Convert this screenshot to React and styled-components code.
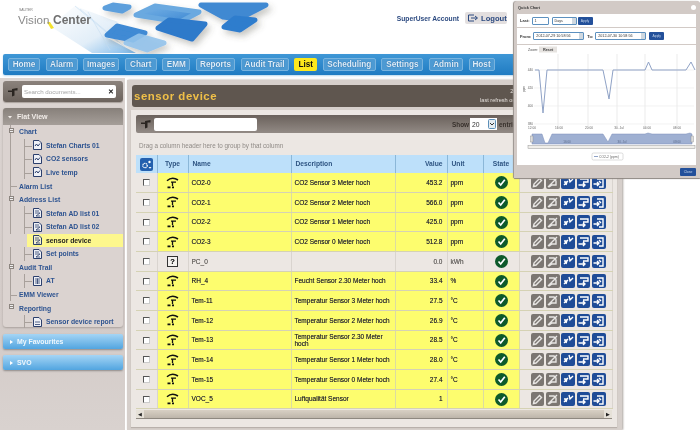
import React from 'react';
import styled, { createGlobalStyle } from 'styled-components';

const GlobalStyle = createGlobalStyle`
  html, body { margin: 0; padding: 0; background: #fff; }
  body { font-family: "Liberation Sans", Arial, sans-serif; overflow: hidden; }
`;

const Page = styled.div`
  position: relative;
  width: 700px;
  height: 430px;
  overflow: hidden;
  background: #fff;
  filter: blur(0.35px);
`;

const Header = styled.header`
  display: flex;
  align-items: center;
  height: 54px;
  padding-right: 193px;
`;

const Logo = styled.svg`
  flex: none;
  width: 290px;
  height: 54px;
`;

const Account = styled.span`
  margin-left: auto;
  margin-bottom: 18px;
  font-size: 6.7px;
  font-weight: bold;
  color: #2c4a80;
`;

const LogoutButton = styled.button`
  display: flex;
  align-items: center;
  gap: 2px;
  height: 12px;
  width: 42px;
  margin: 0 0 18px 6px;
  padding: 0 0 0 3px;
  border: 0;
  border-radius: 2px;
  background: #e3dfdf;
  font: bold 7.6px "Liberation Sans", Arial, sans-serif;
  color: #2c4a80;
`;

const NavBar = styled.nav`
  display: flex;
  align-items: center;
  gap: 5.6px;
  width: 619px;
  height: 21px;
  margin-left: 3px;
  padding-left: 5px;
  box-sizing: border-box;
  border-radius: 2px;
  background: linear-gradient(#3f97d6, #1f7bc2);
  box-shadow: 0 1px 2px #b9d8ee;
`;

const NavItem = styled.a`
  display: flex;
  align-items: center;
  justify-content: center;
  flex: none;
  width: ${(p) => p.$w}px;
  height: 13px;
  border-radius: 2px;
  box-sizing: border-box;
  font-size: 8.2px;
  font-weight: bold;
  color: ${(p) => (p.$active ? '#111' : '#dfeefa')};
  background: ${(p) => (p.$active ? '#fde81c' : '#4d9ad3')};
  border: ${(p) => (p.$active ? '0' : '1px solid #78b3de')};
  text-shadow: ${(p) => (p.$active ? 'none' : '0 0 1px #17568c')};
`;

const Body = styled.div`
  display: flex;
  gap: 2px;
  height: 352px;
  margin-top: 3px;
`;

const Sidebar = styled.aside`
  display: flex;
  flex-direction: column;
  width: 125px;
  flex: none;
  padding: 3px 2px 0 3px;
  box-sizing: border-box;
  background: linear-gradient(#dcd5d2, #d3cbc8 70%, #d9d2cf);
`;

const SearchPanel = styled.div`
  display: flex;
  align-items: center;
  gap: 4px;
  height: 21px;
  padding-left: 5px;
  border-radius: 3px;
  background: linear-gradient(#8b827c, #6c635d);
  box-shadow: 0 1px 1px #a9a19c;
`;

const SearchBox = styled.div`
  display: flex;
  align-items: center;
  justify-content: space-between;
  width: 94px;
  height: 13px;
  padding: 0 2px;
  border-radius: 2px;
  box-sizing: border-box;
  background: #fff;
  font-size: 6.2px;
  color: #a5a5a5;
`;

const Clear = styled.b`
  font-size: 7px;
  color: #222;
`;

const TreePanel = styled.section`
  height: 219px;
  margin-top: 6px;
  border-radius: 3px;
  background: #dbd3d0;
  box-shadow: 0 1px 2px #a9a19c;
`;

const TreeHeader = styled.div`
  display: flex;
  align-items: center;
  gap: 5px;
  height: 17px;
  padding-left: 5px;
  border-radius: 3px 3px 0 0;
  background: linear-gradient(#87807a, #a59e99);
  font-size: 7.1px;
  font-weight: bold;
  color: #f1ece8;
`;

const TreeList = styled.ul`
  list-style: none;
  margin: 0;
  padding: 0;
`;

const TreeRow = styled.li`
  position: relative;
  display: flex;
  align-items: center;
  gap: 4px;
  height: 13.57px;
  padding-left: ${(p) => (p.$child ? 30 : 16)}px;
  margin-left: ${(p) => (p.$active ? 24 : 0)}px;
  ${(p) => p.$active && 'padding-left: 6px; background: #fdf78d;'}
  font-size: 6.8px;
  font-weight: bold;
  color: ${(p) => (p.$active ? '#222' : '#2d5390')};
  white-space: nowrap;
`;

const Expander = styled.i`
  position: absolute;
  z-index: 1;
  left: 6px;
  top: 3px;
  width: 3px;
  height: 3px;
  border: 1px solid #8c8580;
  background: linear-gradient(#8c8580, #8c8580) center / 3px 1px no-repeat, #eee;
`;

const Branch = styled.i`
  position: absolute;
  left: ${(p) => p.$left}px;
  top: 7px;
  width: ${(p) => p.$w}px;
  height: 1px;
  background: #a8a09b;
`;

const Trunk = styled.i`
  position: absolute;
  left: ${(p) => p.$left}px;
  top: 0;
  bottom: 0;
  width: 1px;
  background: #a8a09b;
`;

const Accordion = styled.div`
  display: flex;
  align-items: center;
  gap: 4px;
  height: 15px;
  margin-top: ${(p) => p.$top}px;
  padding-left: 7px;
  border-radius: 2px;
  background: linear-gradient(#a5d5f5, #52a5e0);
  box-shadow: 0 1px 2px #8f8a88;
  font-size: 6.9px;
  font-weight: bold;
  color: #eef7fd;
`;

const Main = styled.main`
  width: 495px;
  flex: none;
  margin-top: 2px;
  padding: 5px 5px 0 4px;
  box-sizing: border-box;
  background: #d6cfcb;
  box-shadow: 1px 0 2px #a9a19c;
`;

const TitleBar = styled.div`
  display: flex;
  align-items: center;
  justify-content: space-between;
  height: 22px;
  margin-left: 1px;
  padding: 0 48px 0 2px;
  border-radius: 3px;
  background: #5f564f;
`;

const Title = styled.h1`
  margin: 0;
  font-size: 11.4px;
  letter-spacing: 0.55px;
  color: #f0c048;
`;

const Refresh = styled.div`
  text-align: center;
  font-size: 5.6px;
  line-height: 9px;
  color: #e4dfdb;
`;

const Card = styled.div`
  height: 312px;
  margin-top: 3px;
  padding: 5px 5px 0;
  background: #ece7e3;
  box-shadow: 0 1px 1px #b8b0ab;
`;

const Toolbar = styled.div`
  display: flex;
  align-items: center;
  height: 18px;
  padding: 0 5px;
  border-radius: 2px;
  background: linear-gradient(#6a615b, #928a85);
`;

const FilterInput = styled.div`
  width: 103px;
  height: 13px;
  margin-left: 3px;
  border-radius: 2px;
  background: #fff;
`;

const ShowLabel = styled.span`
  margin-left: ${(p) => p.$left || 0}px;
  font-size: 6.4px;
  font-weight: bold;
  color: #38312c;
`;

const PageSize = styled.div`
  display: flex;
  align-items: center;
  justify-content: space-between;
  width: 27px;
  height: 12px;
  margin: 0 2px 0 1px;
  padding: 0 1px 0 2px;
  box-sizing: border-box;
  background: #fff;
  font-size: 6.8px;
  color: #333;
`;

const GroupHint = styled.div`
  height: 22px;
  line-height: 26px;
  font-size: 6.3px;
  color: #8f8a86;
  padding-left: 3px;
`;

const Table = styled.table`
  width: 476px;
  table-layout: fixed;
  border-collapse: collapse;
  font-size: 6.5px;
  line-height: 7.4px;
  color: #2f2f28;
`;

const Th = styled.th`
  height: 18px;
  padding: 0 4px;
  box-sizing: border-box;
  background: #bde0fa;
  border-right: 1px solid #8bb7d8;
  font-size: 6.7px;
  color: #2e5482;
  text-align: ${(p) => p.$align || 'left'};
`;

const Td = styled.td`
  height: 19.67px;
  padding: 0 ${(p) => (p.$align === 'right' ? 4 : 3)}px 0 3px;
  box-sizing: border-box;
  background: ${(p) => (p.$plain ? '#ece7e3' : '#fdfd6e')};
  border-bottom: 1px solid #d5d2b4;
  border-right: 1px solid ${(p) => (p.$plain ? '#d9d4cf' : '#dcdca0')};
  color: ${(p) => (p.$muted ? '#77726e' : 'inherit')};
  text-shadow: 0 0 0.4px #555;
  text-align: ${(p) => p.$align || 'left'};
`;

const CheckBox = styled.i`
  display: block;
  width: 5px;
  height: 5px;
  margin: 0 auto;
  border: 1px solid #555;
  border-right-color: #ccc;
  border-bottom-color: #ccc;
  background: #fff;
`;

const GearButton = styled.span`
  display: flex;
  align-items: center;
  justify-content: center;
  width: 13px;
  height: 13px;
  margin: 0 auto;
  border-radius: 2px;
  background: #2460ae;
`;

const StateDot = styled.span`
  display: flex;
  align-items: center;
  justify-content: center;
  width: 13px;
  height: 13px;
  margin: 0 auto;
  border-radius: 50%;
  background: #0d5a2b;
`;

const Actions = styled.div`
  display: flex;
  gap: 1.6px;
  padding-left: 11px;
`;

const ActionButton = styled.span`
  display: flex;
  align-items: center;
  justify-content: center;
  width: 13.8px;
  height: 13.5px;
  border-radius: 2px;
  background: ${(p) => (p.$grey ? '#7b7672' : '#1f4c97')};
`;

const HelpBox = styled.span`
  display: flex;
  align-items: center;
  justify-content: center;
  width: 9px;
  height: 9px;
  margin: 0 auto;
  border: 1px solid #333;
  font-size: 7.5px;
  font-weight: bold;
  color: #222;
  background: #f4f2ef;
`;

const Scrollbar = styled.div`
  display: flex;
  align-items: center;
  justify-content: space-between;
  height: 8px;
  margin-top: 1px;
  width: 476px;
  background: linear-gradient(#d8d0c4, #bdb5aa);
  border-bottom: 1px solid #8e8880;
`;

const ScrollEnd = styled.span`
  display: flex;
  align-items: center;
  justify-content: center;
  width: 8px;
  height: 8px;
  background: #e6e1d8;
  font-size: 4.5px;
  color: #222;
`;

const Popup = styled.div`
  position: absolute;
  top: 1px;
  right: 0;
  width: 186px;
  height: 177px;
  box-sizing: border-box;
  display: flex;
  flex-direction: column;
  padding: 0 4px 0 3px;
  border-radius: 3px 3px 0 0;
  background: #d2cac6;
  box-shadow: 0 1px 1px #8c8580, -1px 0 1px #9c9590;
`;

const PopupTitle = styled.div`
  display: flex;
  justify-content: space-between;
  align-items: center;
  height: 13px;
  padding-left: 1px;
  font-size: 3.9px;
  font-weight: bold;
  color: #3a3a3a;
`;

const CloseDot = styled.i`
  width: 5px;
  height: 5px;
  border-radius: 50%;
  background: #fff;
`;

const ControlRow = styled.div`
  display: flex;
  align-items: center;
  gap: 2px;
  height: ${(p) => p.$h}px;
  margin-bottom: 1px;
  padding-left: 3px;
  background: #fff;
  font-size: 4px;
  font-weight: bold;
  color: #333;
`;

const Field = styled.span`
  display: flex;
  align-items: center;
  justify-content: space-between;
  width: ${(p) => p.$w}px;
  height: 8px;
  margin-left: ${(p) => p.$gap || 0}px;
  padding-left: 2px;
  box-sizing: border-box;
  border: 1px solid #5c90bf;
  border-radius: 1px;
  font-size: 3.7px;
  font-weight: normal;
`;

const Spin = styled.i`
  width: 4px;
  height: 6px;
  background: #cfd8e0;
`;

const ToLabel = styled.span`
  margin-left: 1px;
`;

const ApplyButton = styled.span`
  display: flex;
  align-items: center;
  justify-content: center;
  width: 15px;
  height: 8px;
  margin-left: ${(p) => p.$gap || 0}px;
  border-radius: 1px;
  background: #23509a;
  font-size: 3.4px;
  font-weight: normal;
  color: #c4d4ea;
`;

const ChartBox = styled.div`
  height: 120px;
  background: #fff;
`;

const PopupFooter = styled.div`
  flex: 1;
  display: flex;
  align-items: center;
  justify-content: flex-end;
`;

const CloseButton = styled.span`
  display: flex;
  align-items: center;
  justify-content: center;
  width: 16px;
  height: 8px;
  border-radius: 1px;
  background: #23509a;
  font-size: 3.4px;
  color: #c4d4ea;
`;

const NAV = [
  ['Home', 32], ['Alarm', 32], ['Images', 36], ['Chart', 32], ['EMM', 28],
  ['Reports', 39], ['Audit Trail', 48], ['List', 23], ['Scheduling', 53],
  ['Settings', 42], ['Admin', 34], ['Host', 26],
];

const TREE = [
  { label: 'Chart', expander: true, trunk: true },
  { label: 'Stefan Charts 01', icon: 'chart', child: true, trunk: true },
  { label: 'CO2 sensors', icon: 'chart', child: true, trunk: true },
  { label: 'Live temp', icon: 'chart', child: true, trunk: true },
  { label: 'Alarm List', trunk: true, stub: true },
  { label: 'Address List', expander: true, trunk: true },
  { label: 'Stefan AD list 01', icon: 'list', child: true, trunk: true },
  { label: 'Stefan AD list 02', icon: 'list', child: true, trunk: true },
  { label: 'sensor device', icon: 'list', child: true, active: true, trunk: true },
  { label: 'Set points', icon: 'list', child: true, trunk: true },
  { label: 'Audit Trail', expander: true, trunk: true },
  { label: 'AT', icon: 'table', child: true, trunk: true },
  { label: 'EMM Viewer', trunk: true, stub: true },
  { label: 'Reporting', expander: true },
  { label: 'Sensor device report', icon: 'report', child: true },
];

const ROWS = [
  ['CO2-0', 'CO2 Sensor 3 Meter hoch', '453.2', 'ppm'],
  ['CO2-1', 'CO2 Sensor 2 Meter hoch', '566.0', 'ppm'],
  ['CO2-2', 'CO2 Sensor 1 Meter hoch', '425.0', 'ppm'],
  ['CO2-3', 'CO2 Sensor 0 Meter hoch', '512.8', 'ppm'],
  ['PC_0', '', '0.0', 'kWh'],
  ['RH_4', 'Feucht Sensor 2.30 Meter hoch', '33.4', '%'],
  ['Tem-11', 'Temperatur Sensor 3 Meter hoch', '27.5', '°C'],
  ['Tem-12', 'Temperatur Sensor 2 Meter hoch', '26.9', '°C'],
  ['Tem-13', 'Temperatur Sensor 2.30 Meter hoch', '28.5', '°C'],
  ['Tem-14', 'Temperatur Sensor 1 Meter hoch', '28.0', '°C'],
  ['Tem-15', 'Temperatur Sensor 0 Meter hoch', '27.4', '°C'],
  ['VOC_5', 'Luftqualität Sensor', '1', ''],
];

const LogoArt = () => (
  <Logo viewBox="0 0 290 54">
    <defs>
      <linearGradient id="tile" x1="0" y1="0" x2="1" y2="1">
        <stop offset="0" stopColor="#7ab4e6" />
        <stop offset="1" stopColor="#3a86d2" />
      </linearGradient>
      <linearGradient id="paper" x1="0" y1="0" x2="1" y2="1">
        <stop offset="0" stopColor="#ffffff" />
        <stop offset="0.6" stopColor="#e2eef8" />
        <stop offset="1" stopColor="#7cb8ea" />
      </linearGradient>
      <filter id="soft" x="-20%" y="-20%" width="150%" height="150%">
        <feDropShadow dx="3" dy="4" stdDeviation="3" floodColor="#554" floodOpacity="0.32" />
      </filter>
    </defs>
    <polygon points="75,6 118,22 104,36 136,53 92,53 50,26" fill="url(#paper)" />
    <path d="M75 6 L118 42 M80 9 L126 48 M88 12 L110 50" stroke="#c6def2" strokeWidth="0.6" fill="none" />
    <g filter="url(#soft)" strokeLinejoin="round" strokeWidth="5">
      <polygon points="113,5 129,7 122,11 105,8" fill="url(#tile)" stroke="#5d9fdc" />
      <polygon points="155,6 199,12 180,22 136,15" fill="url(#tile)" stroke="#6aa9e0" />
      <polygon points="169,20 205,24 192,39 158,28" fill="#2f7aca" stroke="#2f7aca" />
      <polygon points="201,5 266,5 239,19 223,17" fill="#4189d2" stroke="#4189d2" />
      <polygon points="235,18 255,20 240,30 224,27" fill="#2f7dcd" stroke="#2f7dcd" />
      <polygon points="117,26 145,33 133,40 107,35" fill="#3f8ad4" stroke="#3f8ad4" />
      <polygon points="139,36 164,43 147,50 126,43" fill="#94c4ec" stroke="#94c4ec" opacity="0.9" />
    </g>
    <polygon points="47,22 50,22 54,28 51,29" fill="#f3e12c" />
    <text x="19" y="11" fontSize="3.400" fill="#777" fontFamily="Liberation Sans">SAUTER</text>
    <text x="18" y="24" fontSize="11.600" fill="#8a8a8a" fontFamily="Liberation Sans">Vision</text>
    <text x="53" y="24" fontSize="12" fill="#6f6f6f" fontWeight="bold" fontFamily="Liberation Sans">Center</text>
  </Logo>
);

const DocIcon = ({ kind, active }) => (
  <svg width="9" height="10" viewBox="0 0 9 10" style={{ flex: 'none' }}>
    <path d="M.5.5H6L8.500 3V9.500H.5Z" fill={active ? '#f3f0d0' : '#eef0f6'} stroke="#2b3f6c" />
    {kind === 'chart' && <path d="M2 6L3.500 4 5 6 7 3.500" stroke="#2b3f6c" fill="none" />}
    {kind === 'list' && <path d="M2 3H6M2 5H7L3 8H7" stroke="#2b3f6c" fill="none" strokeWidth=".8" />}
    {kind === 'table' && <path d="M2 3H7M2 5H7M2 7H7M4.500 2.500V8" stroke="#2b3f6c" fill="none" strokeWidth=".8" />}
    {kind === 'report' && <path d="M2 5H7M2 7.500H7" stroke="#2b3f6c" fill="none" strokeWidth=".8" />}
  </svg>
);

const FilterIcon = ({ size = 10 }) => (
  <svg width={size} height={size} viewBox="0 0 10 10">
    <path d="M0 3.500H4V2L9.500 1V3.500H6.500V8.500L4 9.500V5H0Z" fill="#2a2521" />
  </svg>
);

const SensorIcon = () => (
  <svg width="13" height="12" viewBox="0 0 13 12" style={{ display: 'block', margin: '0 auto' }}>
    <path d="M1 3.800Q6-.8 12 3" stroke="#111" strokeWidth="1.500" fill="none" />
    <path d="M5 5.200H10M6.500 5V9" stroke="#111" strokeWidth="1.300" fill="none" />
    <path d="M1.500 10.400H4.500M6 10.400H8" stroke="#111" strokeWidth="1.700" fill="none" />
  </svg>
);

const CheckIcon = () => (
  <svg width="9" height="9" viewBox="0 0 9 9">
    <path d="M1.500 4.500L3.700 7 7.800 1.700" stroke="#fff" strokeWidth="1.700" fill="none" />
  </svg>
);

const GearIcon = () => (
  <svg width="11" height="11" viewBox="0 0 11 11">
    <circle cx="4" cy="6.500" r="2.200" fill="none" stroke="#fff" strokeWidth="1.300" strokeDasharray="1.200 .5" />
    <circle cx="8.500" cy="3" r="1.200" fill="#fff" />
    <path d="M7.500 8H10.500L9 9.800Z" fill="#fff" />
  </svg>
);

const ACTION_PATHS = [
  'M2.500 10.500L3 8 8.500 2.500 10.500 4.500 5 10Z',
  'M3 3H8L10 5V9H6L3 11M2 11L11 2',
  'M2 9L6 5M2 6H5L4 9M7 2L8 6 11 3',
  'M3 3H11V6H6M1.500 9H8M6 7L8 9 6 11',
  'M5 3H11V11H7M7 5L9 7M1.500 8H7M5 6L7 8 5 10',
];

const ActionIcons = () => (
  <Actions>
    {ACTION_PATHS.map((d, i) => (
      <ActionButton key={d} $grey={i < 2}>
        <svg width="13" height="13" viewBox="0 0 13 13">
          <path d={d} stroke={i < 2 ? '#e8e6e4' : '#fff'} strokeWidth="1.400" fill="none" />
        </svg>
      </ActionButton>
    ))}
  </Actions>
);

const QuickChart = () => (
  <svg width="179" height="120" viewBox="517 45 179 120" style={{ display: 'block' }}>
    <text x="528" y="51" fontSize="3.600" fill="#555" fontFamily="Liberation Sans">Zoom:</text>
    <rect x="539" y="46.500" width="18" height="6" fill="#e6e3e0" />
    <text x="543" y="51" fontSize="3.800" fontWeight="bold" fill="#444" fontFamily="Liberation Sans">Reset</text>
    {[558, 588, 617, 645, 677].map((x) => (
      <line key={x} x1={x} x2={x} y1="54" y2="126" stroke="#e2e2e2" strokeWidth=".7" />
    ))}
    {[[70, '440'], [88, '420'], [106, '400'], [124, '380']].map(([y, t]) => (
      <g key={t}>
        <line x1="534" x2="694" y1={y} y2={y} stroke="#ececec" strokeWidth=".7" />
        <text x="533" y={y + 1.200} textAnchor="end" fontSize="3.200" fill="#666" fontFamily="Liberation Sans">{t}</text>
      </g>
    ))}
    <text x="0" y="0" fontSize="3.200" fill="#555" fontFamily="Liberation Sans" transform="translate(525 92) rotate(-90)">ppm</text>
    <polyline
      points="535,70 539,70 543,113 547,70 603,70 609,99 613,70 645,70 648.500,62 652,70 686,70 691,62 695,70"
      fill="none"
      stroke="#8fa2c6"
      strokeWidth="1"
    />
    {[[532, '12:00'], [559, '16:00'], [589, '20:00'], [619, '30. Jul'], [647, '04:00'], [677, '08:00']].map(([x, t]) => (
      <text key={t} x={x} y="129" textAnchor="middle" fontSize="3.200" fill="#666" fontFamily="Liberation Sans">{t}</text>
    ))}
    <path
      d="M532 144V134H542L545 143H548L552 134H603L608 142L612 134H645L648 133L652 134H686L690 133L692 134V144Z"
      fill="#9fb0d2"
      stroke="#7c8fb8"
      strokeWidth=".5"
    />
    {[[567, '16:00'], [622, '30. Jul'], [677, '08:00']].map(([x, t]) => (
      <text key={t} x={x} y="143" textAnchor="middle" fontSize="3" fill="#5a6a8a" fontFamily="Liberation Sans">{t}</text>
    ))}
    <rect x="528" y="145.500" width="167" height="3" fill="#f0eeea" stroke="#999" strokeWidth=".5" />
    <rect x="530.500" y="136" width="2.500" height="6" fill="#ddd" stroke="#888" strokeWidth=".4" />
    <rect x="691" y="136" width="2.500" height="6" fill="#ddd" stroke="#888" strokeWidth=".4" />
    <rect x="592" y="153" width="31" height="7" rx="1.500" fill="#fff" stroke="#bbb" strokeWidth=".5" />
    <line x1="594" x2="598" y1="156.500" y2="156.500" stroke="#8fa2c6" />
    <text x="599" y="158" fontSize="3.400" fill="#666" fontFamily="Liberation Sans">CO2-2 (ppm)</text>
  </svg>
);

const App = () => (
  <Page>
    <GlobalStyle />
    <Header>
      <LogoArt />
      <Account>SuperUser Account</Account>
      <LogoutButton>
        <svg width="11" height="8" viewBox="0 0 11 8">
          <path d="M6 1H.5V7H6M3 4H9M7 2L9.500 4 7 6" stroke="#2c4a80" fill="none" />
        </svg>
        Logout
      </LogoutButton>
    </Header>
    <NavBar>
      {NAV.map(([label, w]) => (
        <NavItem key={label} $w={w} $active={label === 'List'}>{label}</NavItem>
      ))}
    </NavBar>
    <Body>
      <Sidebar>
        <SearchPanel>
          <FilterIcon />
          <SearchBox>
            Search documents...
            <Clear>✕</Clear>
          </SearchBox>
        </SearchPanel>
        <TreePanel>
          <TreeHeader>
            <svg width="4" height="4" viewBox="0 0 4 4"><path d="M0 1H4L2 3.500Z" fill="#f1ece8" /></svg>
            Flat View
          </TreeHeader>
          <TreeList>
            {TREE.map((item) => (
              <TreeRow key={item.label} $child={item.child} $active={item.active}>
                {!item.active && item.trunk && <Trunk $left={7} />}
                {item.expander && <Expander />}
                {item.stub && <Branch $left={8} $w={6} />}
                {item.child && !item.active && <Trunk $left={21} />}
                {item.child && !item.active && <Branch $left={21} $w={8} />}
                {item.icon && <DocIcon kind={item.icon} active={item.active} />}
                {item.label}
              </TreeRow>
            ))}
          </TreeList>
        </TreePanel>
        <Accordion $top={7}>
          <svg width="3" height="4" viewBox="0 0 3 4"><path d="M0 0L3 2 0 4Z" fill="#fff" /></svg>
          My Favourites
        </Accordion>
        <Accordion $top={6}>
          <svg width="3" height="4" viewBox="0 0 3 4"><path d="M0 0L3 2 0 4Z" fill="#fff" /></svg>
          SVO
        </Accordion>
      </Sidebar>
      <Main>
        <TitleBar>
          <Title>sensor device</Title>
          <Refresh>
            2012-07-30
            <br />
            last refresh on 2012-07-30 10:58:56
          </Refresh>
        </TitleBar>
        <Card>
          <Toolbar>
            <FilterIcon />
            <FilterInput />
            <ShowLabel $left={195}>Show</ShowLabel>
            <PageSize>
              20
              <svg width="8" height="10" viewBox="0 0 8 10">
                <rect x=".5" y=".5" width="7" height="9" rx="1" fill="#e4ecf2" stroke="#5c8fb8" />
                <path d="M2 4L4 6 6 4" stroke="#333" fill="none" />
              </svg>
            </PageSize>
            <ShowLabel>entries</ShowLabel>
          </Toolbar>
          <GroupHint>Drag a column header here to group by that column</GroupHint>
          <Table>
            <colgroup>
              {[21, 31, 103, 104, 52, 36, 36, 93].map((w, i) => <col key={i} width={w} />)}
            </colgroup>
            <thead>
              <tr>
                <Th style={{ padding: 0 }}><GearButton><GearIcon /></GearButton></Th>
                <Th $align="center">Type</Th>
                <Th>Name</Th>
                <Th>Description</Th>
                <Th $align="right">Value</Th>
                <Th>Unit</Th>
                <Th $align="center">State</Th>
                <Th style={{ background: '#ece7e3', borderRight: 0 }} />
              </tr>
            </thead>
            <tbody>
              {ROWS.map(([name, desc, value, unit]) => {
                const plain = name === 'PC_0';
                return (
                  <tr key={name}>
                    <Td $plain><CheckBox /></Td>
                    <Td $plain={plain}>{plain ? <HelpBox>?</HelpBox> : <SensorIcon />}</Td>
                    <Td $plain={plain} $muted={plain}>{name}</Td>
                    <Td $plain={plain}>{desc}</Td>
                    <Td $plain={plain} $muted={plain} $align="right">{value}</Td>
                    <Td $plain={plain} $muted={plain}>{unit}</Td>
                    <Td $plain={plain}><StateDot><CheckIcon /></StateDot></Td>
                    <Td $plain style={{ padding: 0 }}><ActionIcons /></Td>
                  </tr>
                );
              })}
            </tbody>
          </Table>
          <Scrollbar>
            <ScrollEnd>◀</ScrollEnd>
            <ScrollEnd>▶</ScrollEnd>
          </Scrollbar>
        </Card>
      </Main>
    </Body>
    <Popup>
      <PopupTitle>
        Quick Chart
        <CloseDot />
      </PopupTitle>
      <ControlRow $h={13}>
        Last:
        <Field $w={17}>1</Field>
        <Field $w={25} $gap={1}>Days<Spin /></Field>
        <ApplyButton $gap={-1}>Apply</ApplyButton>
      </ControlRow>
      <ControlRow $h={16}>
        From:
        <Field $w={51}>2012-07-29 10:58:56<Spin /></Field>
        <ToLabel>To:</ToLabel>
        <Field $w={51}>2012-07-30 10:58:56<Spin /></Field>
        <ApplyButton $gap={1}>Apply</ApplyButton>
      </ControlRow>
      <ChartBox><QuickChart /></ChartBox>
      <PopupFooter><CloseButton>Close</CloseButton></PopupFooter>
    </Popup>
  </Page>
);

export default App;
